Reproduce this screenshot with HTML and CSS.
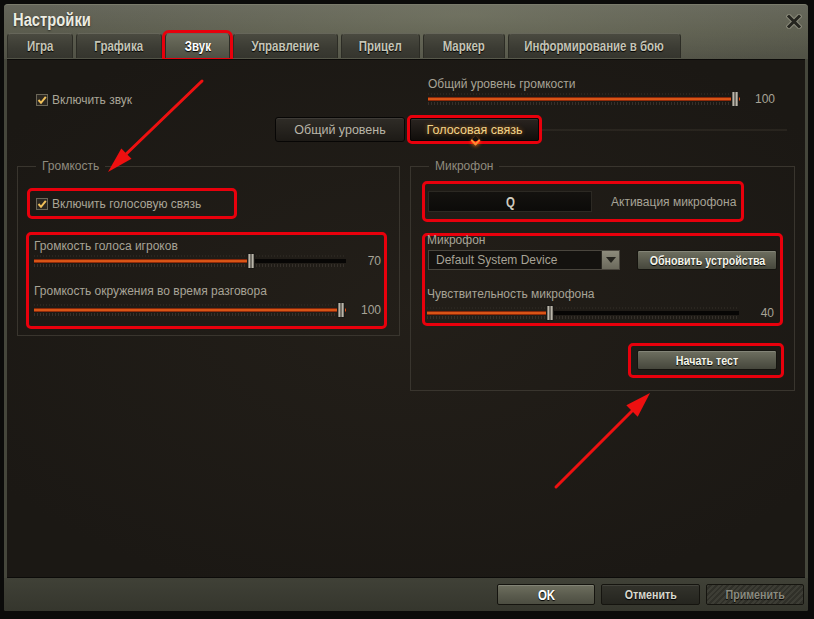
FILE: index.html
```html
<!DOCTYPE html>
<html lang="ru">
<head>
<meta charset="utf-8">
<title>Настройки</title>
<link rel="stylesheet" href="styles.css">
</head>
<body>
<div class="window">
  <header class="header">
    <div class="title-row">
      <h1 class="title"><span class="cond cond-left">Настройки</span></h1>
      <span class="close" aria-label="Закрыть">
        <svg width="16" height="15" viewBox="0 0 16 15"><path d="M3 2.5 L13 12.5 M13 2.5 L3 12.5" stroke="#8a8a7a" stroke-width="5" stroke-linecap="square"/><path d="M3 2.5 L13 12.5 M13 2.5 L3 12.5" stroke="#25251f" stroke-width="3" stroke-linecap="square"/></svg>
      </span>
    </div>
    <nav class="tabs">
      <span class="tab w-igra"><span class="cond">Игра</span></span>
      <span class="tab w-graf"><span class="cond">Графика</span></span>
      <span class="tab tab-active w-zvuk"><span class="cond">Звук</span></span>
      <span class="tab w-upr"><span class="cond">Управление</span></span>
      <span class="tab w-pric"><span class="cond">Прицел</span></span>
      <span class="tab w-mark"><span class="cond">Маркер</span></span>
      <span class="tab w-info"><span class="cond">Информирование в бою</span></span>
    </nav>
  </header>

  <main class="content">
    <div class="top-grid">
      <div class="top-left">
        <label class="check"><span class="box"><svg width="10" height="10" viewBox="0 0 10 10"><path d="M1.5 5 L4 7.8 L8.8 1.8" fill="none" stroke="#f2c15a" stroke-width="2"/></svg></span>Включить звук</label>
      </div>
      <div class="top-right">
        <div class="slider-label">Общий уровень громкости</div>
        <div class="slider">
          <div class="track"><div class="fill" style="width:100%"></div><span class="thumb" style="left:98.5%"></span></div>
          <span class="value">100</span>
        </div>
      </div>
    </div>

    <div class="subtabs">
      <span class="subtab">Общий уровень</span>
      <span class="mark mark-subtab"><span class="subtab subtab-active">Голосовая связь</span></span>
    </div>

    <div class="panels">
      <fieldset class="group group-left">
        <legend>Громкость</legend>
        <div class="mark mark-voice">
          <label class="check"><span class="box"><svg width="10" height="10" viewBox="0 0 10 10"><path d="M1.5 5 L4 7.8 L8.8 1.8" fill="none" stroke="#f2c15a" stroke-width="2"/></svg></span>Включить голосовую связь</label>
        </div>
        <div class="mark mark-vol">
          <div class="slider-label">Громкость голоса игроков</div>
          <div class="slider">
            <div class="track"><div class="fill" style="width:69%"></div><span class="thumb" style="left:69.5%"></span></div>
            <span class="value">70</span>
          </div>
          <div class="slider-label label-gap">Громкость окружения во время разговора</div>
          <div class="slider slider-low">
            <div class="track"><div class="fill" style="width:100%"></div><span class="thumb" style="left:98.5%"></span></div>
            <span class="value">100</span>
          </div>
        </div>
      </fieldset>

      <fieldset class="group group-right">
        <legend>Микрофон</legend>
        <div class="mark mark-key">
          <span class="keybox"><span class="cond">Q</span></span>
          <span class="key-label">Активация микрофона</span>
        </div>
        <div class="mark mark-mic">
          <div class="slider-label mic-label">Микрофон</div>
          <div class="mic-row">
            <div class="dropdown">
              <span class="dropdown-text">Default System Device</span>
              <span class="dropdown-btn"><svg width="10" height="7" viewBox="0 0 10 7"><path d="M0 0 H10 L5 6 Z" fill="#24231e"/></svg></span>
            </div>
            <span class="btn btn-olive"><span class="cond">Обновить устройства</span></span>
          </div>
          <div class="slider-label label-gap2">Чувствительность микрофона</div>
          <div class="slider slider-low">
            <div class="track"><div class="fill" style="width:39%"></div><span class="thumb" style="left:39.5%"></span></div>
            <span class="value">40</span>
          </div>
        </div>
        <div class="mark mark-test">
          <span class="btn btn-olive btn-test"><span class="cond">Начать тест</span></span>
        </div>
      </fieldset>
    </div>
  </main>

  <footer class="footer">
    <span class="fbtn fbtn-ok"><span class="cond">OK</span></span>
    <span class="fbtn fbtn-cancel"><span class="cond">Отменить</span></span>
    <span class="fbtn fbtn-apply"><span class="cond">Применить</span></span>
  </footer>
</div>

<svg class="arrows" width="814" height="619" viewBox="0 0 814 619">
  <line x1="202" y1="81" x2="122" y2="158" stroke="#ee1010" stroke-width="3" stroke-linecap="round"/>
  <polygon points="108,172 131.5,158.7 121.3,148.5" fill="#ee1010"/>
  <line x1="556" y1="487" x2="636" y2="407" stroke="#ee1010" stroke-width="3" stroke-linecap="round"/>
  <polygon points="650,393 637.7,416.7 626.3,405.3" fill="#ee1010"/>
</svg>
</body>
</html>
```

FILE: styles.css
```css
* { box-sizing: border-box; }
html, body { margin: 0; padding: 0; }

body {
  width: 814px;
  height: 619px;
  overflow: hidden;
  position: relative;
  background: #0b0b0a;
  font-family: "Liberation Sans", Arial, sans-serif;
  font-size: 12px;
  color: #a7a396;
}

.cond {
  display: inline-block;
  white-space: nowrap;
  transform: scaleX(0.82);
}

.cond-left { transform-origin: left center; }

.window {
  margin: 4px 0 0 4px;
  width: 804px;
  height: 607px;
  display: flex;
  flex-direction: column;
  background: #45463b;
  border-radius: 4px 4px 2px 2px;
}

/* ---------- header ---------- */
.header {
  height: 55px;
  flex: none;
  background:
    radial-gradient(ellipse 420px 60px at 460px 10px, rgba(140,142,118,0.35), transparent),
    linear-gradient(180deg, #64655a 0%, #5c5d4f 45%, #515246 100%);
  border-radius: 4px 4px 0 0;
  border-top: 1px solid #7a7b6c;
}

.title-row {
  height: 28px;
  display: flex;
  align-items: center;
  justify-content: space-between;
  padding: 0 6px 0 9px;
}

.title {
  margin: 0;
  font-family: "Liberation Sans", Arial, sans-serif;
  font-weight: bold;
  font-size: 18px;
  color: #ecece2;
  text-shadow: 0 1px 2px rgba(0,0,0,0.6);
  padding-top: 3px;
}

.close { display: flex; margin-top: 4px; }

.tabs {
  display: flex;
  gap: 3px;
  padding-left: 3px;
  height: 26px;
}

.tab {
  height: 25px;
  display: flex;
  align-items: center;
  justify-content: center;
  font-weight: bold;
  font-size: 14px;
  color: #c4c4b6;
  background: linear-gradient(180deg, #4a4a40 0%, #3b3b33 60%, #35352e 100%);
  border: 1px solid #2c2c25;
  border-top-color: #66665a;
  border-bottom: none;
  border-radius: 4px 4px 0 0;
  text-shadow: 0 1px 1px #000;
}

.tab-active {
  color: #ffffff;
  background: linear-gradient(180deg, #6d6e5e 0%, #5a5b4d 60%, #4e4f43 100%);
  outline: 3px solid #e8000c;
  outline-offset: 0;
}

.w-igra { width: 66px; }
.w-graf { width: 86px; }
.w-zvuk { width: 65px; }
.w-upr  { width: 105px; }
.w-pric { width: 79px; }
.w-mark { width: 82px; }
.w-info { width: 173px; }

/* ---------- content ---------- */
.content {
  flex: 1;
  margin: 0 3px;
  padding: 16px 10px 0 10px;
  background:
    radial-gradient(ellipse 500px 300px at 400px 250px, rgba(40,35,28,0.6), transparent),
    #1b1814;
  border-top: 1px solid #0c0b09;
  border-bottom: 1px solid #0c0b09;
}

.top-grid, .panels {
  display: grid;
  grid-template-columns: 383px 385px;
  column-gap: 10px;
  align-items: start;
}

.top-left { padding: 17px 0 0 19px; }
.top-right { padding-left: 18px; }

.check {
  display: flex;
  align-items: center;
  gap: 4px;
  line-height: 14px;
  color: #a9a597;
  white-space: nowrap;
}

.box {
  width: 12px;
  height: 12px;
  flex: none;
  display: flex;
  align-items: center;
  justify-content: center;
  background: #2b2721;
  border: 1px solid #6b6658;
}

.slider-label {
  line-height: 16px;
  color: #a7a396;
  white-space: nowrap;
}

.slider {
  height: 14px;
  display: flex;
  align-items: center;
}

.slider-low { margin-top: 4px; }

.track {
  position: relative;
  width: 312px;
  height: 4px;
  background: #070605;
}

.track::after {
  content: "";
  position: absolute;
  left: 0;
  right: 0;
  top: 5px;
  height: 3px;
  background: repeating-linear-gradient(90deg, #35302a 0 1px, transparent 1px 3px);
}

.track::before {
  content: "";
  position: absolute;
  left: 0;
  right: 0;
  top: -4px;
  height: 2px;
  background: repeating-linear-gradient(90deg, #2a2620 0 1px, transparent 1px 3px);
}

.fill {
  height: 4px;
  background: linear-gradient(180deg, #5c1205 0%, #ff6a1c 50%, #6a1605 100%);
}

.thumb {
  position: absolute;
  top: -6px;
  width: 8px;
  height: 16px;
  margin-left: -4px;
  background: linear-gradient(90deg, #5d5a52 0%, #b9b5aa 25%, #4a4740 50%, #b9b5aa 75%, #6a665d 100%);
  border: 1px solid #1a1815;
  z-index: 1;
}

.value {
  width: 35px;
  text-align: right;
  color: #a7a396;
}

/* ---------- sub tabs ---------- */
.subtabs {
  margin-top: 8px;
  height: 29px;
  display: flex;
  align-items: center;
  justify-content: center;
  gap: 2px;
  padding-left: 5px;
  background: linear-gradient(90deg, transparent 0 520px, rgba(70,64,54,0.3) 520px 770px, transparent 770px);
  background-size: 100% 2px;
  background-position: 0 14px;
  background-repeat: no-repeat;
}

.subtab {
  width: 130px;
  height: 25px;
  display: flex;
  align-items: center;
  justify-content: center;
  color: #b9b5a8;
  font-size: 12.5px;
  background: linear-gradient(180deg, #2f2c27 0%, #1d1a16 100%);
  border: 1px solid #070605;
  border-radius: 3px;
  box-shadow: inset 0 1px 0 rgba(255,255,255,0.08);
}

.subtab-active {
  position: relative;
  width: 129px;
  height: 23px;
  color: #f2d48a;
  text-shadow: 0 0 4px rgba(255,150,40,0.6);
  background: linear-gradient(180deg, #2a2420 0%, #110e0b 100%);
  border-radius: 2px;
}

.subtab-active::after {
  content: "";
  position: absolute;
  left: 61px;
  bottom: -4px;
  width: 5px;
  height: 5px;
  border-right: 2px solid #ff8a30;
  border-bottom: 2px solid #ff8a30;
  transform: rotate(45deg);
  box-shadow: 1px 1px 4px rgba(255,120,20,0.8);
}

/* ---------- marks (red annotation boxes) ---------- */
.mark {
  border: 3px solid #e8000c;
  border-radius: 5px;
}

.mark-subtab { display: flex; }

/* ---------- fieldsets ---------- */
.panels { margin-top: 14px; }

.group {
  margin: 0;
  padding: 0;
  min-width: 0;
  border: 1px solid #39352e;
}

.group legend {
  margin-left: 18px;
  padding: 0 6px;
  line-height: 16px;
  font-size: 12px;
  color: #8f8b7f;
}

.group-left { padding-bottom: 6px; }
.group-right { padding-bottom: 12px; }

.mark-voice {
  margin: 14px 0 0 9px;
  width: 210px;
  height: 31px;
  display: flex;
  align-items: center;
  padding-left: 6px;
}

.mark-vol {
  margin: 13px 0 0 8px;
  width: 361px;
  height: 97px;
  padding: 3px 0 0 5px;
}

.label-gap { margin-top: 15px; }

.mark-key {
  margin: 7px 0 0 11px;
  width: 322px;
  height: 41px;
  display: flex;
  align-items: center;
  padding-left: 3px;
}

.keybox {
  width: 164px;
  height: 21px;
  display: flex;
  align-items: center;
  justify-content: center;
  background: linear-gradient(180deg, #14120f, #0c0b09);
  border: 1px solid #2c2923;
  font-weight: bold;
  font-size: 14px;
  color: #cfcbbf;
}

.key-label {
  margin-left: 19px;
  color: #a7a396;
  white-space: nowrap;
}

.mark-mic {
  margin: 11px 0 0 11px;
  width: 361px;
  height: 93px;
  padding-left: 2px;
}

.mic-label { margin-top: -3px; line-height: 14px; }

.mic-row {
  margin-top: 3px;
  display: flex;
  align-items: center;
  padding-left: 1px;
}

.dropdown {
  width: 192px;
  height: 20px;
  display: flex;
  align-items: center;
  justify-content: space-between;
  background: #14120f;
  border: 1px solid #4a463e;
  padding-left: 7px;
}

.dropdown-text { color: #a7a396; }

.dropdown-btn {
  width: 18px;
  height: 18px;
  display: flex;
  align-items: center;
  justify-content: center;
  background: linear-gradient(180deg, #8d8b7c 0%, #6b695c 100%);
  border-left: 1px solid #2a2822;
}

.btn {
  height: 20px;
  display: flex;
  align-items: center;
  justify-content: center;
  font-weight: bold;
  font-size: 13px;
  color: #f4f4ea;
  text-shadow: 0 1px 1px #000;
  border: 1px solid #15140f;
  border-radius: 2px;
}

.btn-olive {
  width: 140px;
  margin-left: 17px;
  background: linear-gradient(180deg, #6f7061 0%, #5a5b4e 50%, #46473c 100%);
  box-shadow: inset 0 1px 0 rgba(255,255,255,0.15);
}

.label-gap2 { margin-top: 16px; }

.mark-test {
  margin: 17px 0 0 217px;
  width: 156px;
  height: 35px;
  padding: 4px 0 0 6px;
}

.btn-test { margin-left: 0; }

/* ---------- footer ---------- */
.footer {
  height: 33px;
  flex: none;
  display: flex;
  justify-content: flex-end;
  gap: 6px;
  padding: 6px 4px 0 0;
  background: linear-gradient(180deg, #404137 0%, #35362d 100%);
  border-radius: 0 0 2px 2px;
}

.fbtn {
  height: 21px;
  display: flex;
  align-items: center;
  justify-content: center;
  font-weight: bold;
  font-size: 13px;
  border: 1px solid #15140f;
  border-radius: 2px;
  text-shadow: 0 1px 1px #000;
}

.fbtn-ok {
  width: 98px;
  color: #ffffff;
  font-size: 14px;
  background: linear-gradient(180deg, #6e6f5f 0%, #5c5d4f 50%, #4c4d41 100%);
  box-shadow: inset 0 1px 0 rgba(255,255,255,0.15);
}

.fbtn-cancel {
  width: 99px;
  color: #d8d8ce;
  background: linear-gradient(180deg, #33332c 0%, #25251f 100%);
  box-shadow: inset 0 1px 0 rgba(255,255,255,0.08);
}

.fbtn-apply {
  width: 98px;
  color: #8b8b80;
  background: repeating-linear-gradient(135deg, #3d3d35 0 2px, #303029 2px 4px);
}

/* ---------- annotation arrows (overlay) ---------- */
.arrows {
  position: absolute;
  left: 0;
  top: 0;
  pointer-events: none;
}
```
